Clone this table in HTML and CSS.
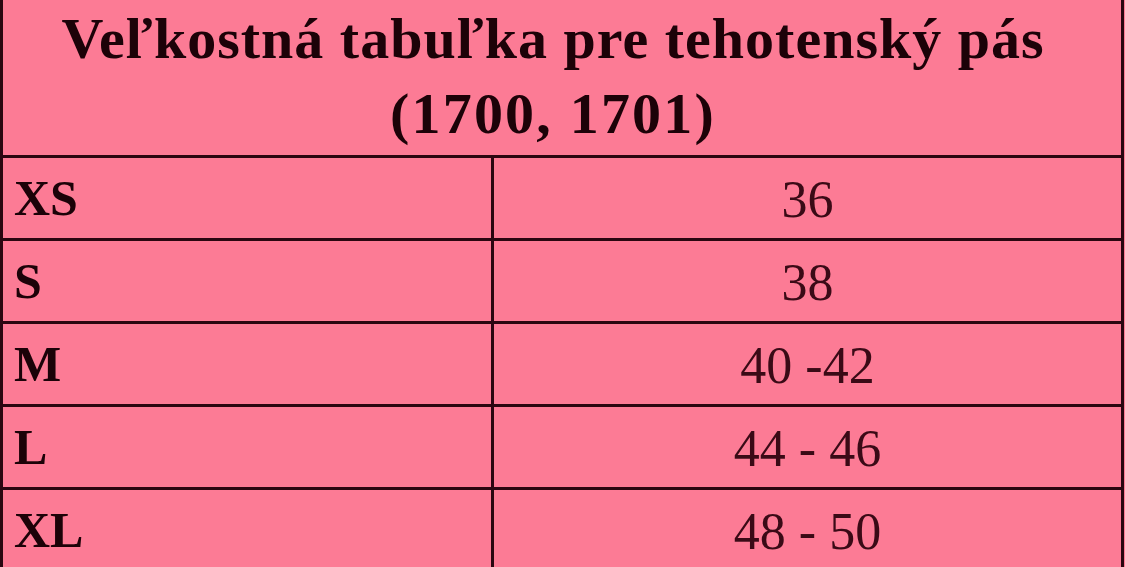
FILE: index.html
```html
<!DOCTYPE html>
<html lang="sk">
<head>
<meta charset="utf-8">
<title>Veľkostná tabuľka</title>
<link rel="stylesheet" href="styles.css">
</head>
<body>
<div class="table">
  <div class="head">
    <div class="title"><span class="line1">Veľkostná tabuľka pre tehotenský pás</span><br><span class="line2">(1700, 1701)</span></div>
  </div>
  <div class="row"><div class="size">XS</div><div class="val">36</div></div>
  <div class="row"><div class="size">S</div><div class="val">38</div></div>
  <div class="row"><div class="size">M</div><div class="val">40 -42</div></div>
  <div class="row"><div class="size">L</div><div class="val">44 - 46</div></div>
  <div class="row"><div class="size">XL</div><div class="val">48 - 50</div></div>
</div>
</body>
</html>
```
FILE: styles.css
```css
html, body {
  margin: 0;
  padding: 0;
  background: #fc7b95;
  overflow: hidden;
  height: 567px;
}
.table {
  width: 1118px;
  border-left: 3px solid #2a0610;
  border-right: 3px solid #2a0610;
  background: #fc7b95;
  color: #1c0208;
  font-family: "Liberation Serif", serif;
}
.head {
  box-sizing: border-box;
  height: 158px;
  padding-top: 1px;
  padding-right: 18px;
  border-bottom: 3px solid #2a0610;
}
.title {
  text-align: center;
  font-weight: bold;
  font-size: 58px;
  line-height: 75px;
}
.line1 {
  letter-spacing: 1px;
}
.line2 {
  letter-spacing: 2.2px;
}
.row {
  display: grid;
  grid-template-columns: 491px 1fr;
  height: 83px;
  box-sizing: border-box;
  border-bottom: 3px solid #2a0610;
}
.size {
  border-right: 3px solid #2a0610;
  font-weight: bold;
  font-size: 50px;
  line-height: 80px;
  padding-left: 11px;
}
.val {
  text-align: center;
  font-size: 52px;
  line-height: 84px;
  color: #3a0a16;
}
```
